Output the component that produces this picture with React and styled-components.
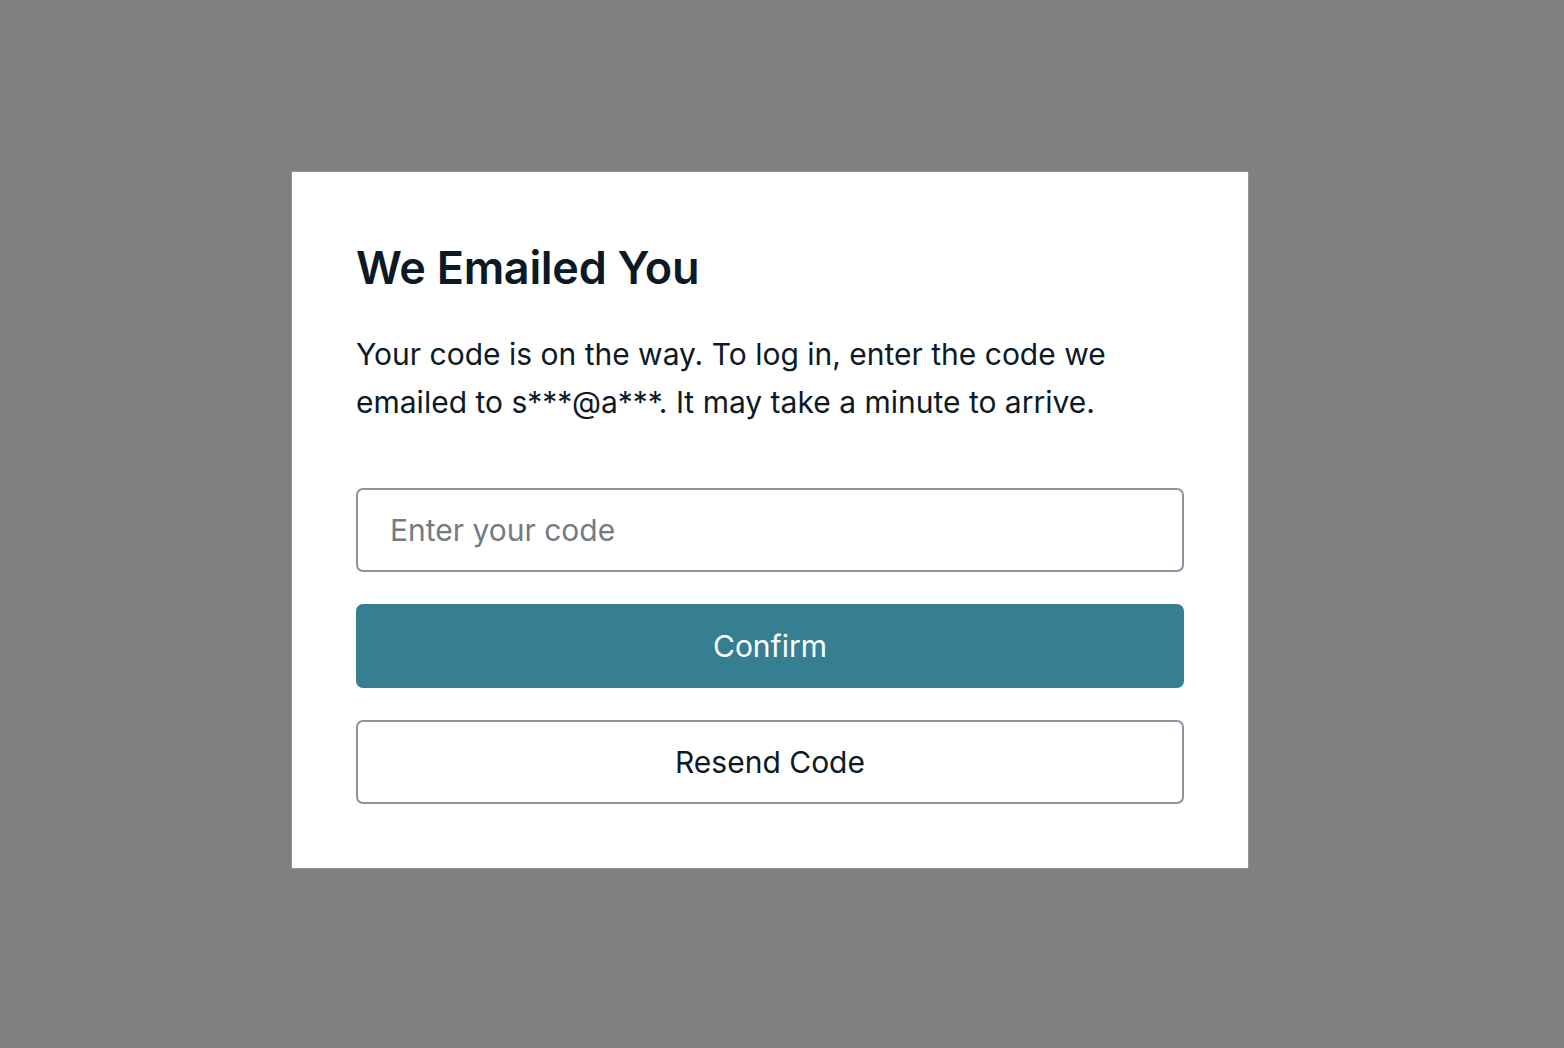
import React from "react"
import styled, { createGlobalStyle } from "styled-components"

const GlobalStyle = createGlobalStyle`
    html, body {
        margin: 0;
        padding: 0;
        background: #808080;
        font-family: 'Inter', 'Liberation Sans', sans-serif;
    }
    * {
        box-sizing: border-box;
    }
`

const Overlay = styled.main`
    min-height: 1048px;
    display: flex;
    justify-content: center;
    padding: 171px 24px 0 0;
`

const Card = styled.section`
    width: 958px;
    height: 698px;
    background: #ffffff;
    border: 1px solid #89949f;
    padding: 64px;
    display: flex;
    flex-direction: column;
`

const Title = styled.h1`
    margin: 0;
    font-size: 45px;
    font-weight: 600;
    line-height: 64px;
    color: #0d1a26;
    letter-spacing: -0.3px;
`

const Description = styled.p`
    margin: 30px 0 0;
    font-size: 30px;
    font-weight: 400;
    line-height: 48px;
    color: #0d1a26;
`

const Form = styled.form`
    margin-top: 62px;
    display: flex;
    flex-direction: column;
    gap: 32px;
`

const CodeInput = styled.input`
    height: 84px;
    width: 100%;
    border: 2px solid #89949f;
    border-radius: 7px;
    padding: 0 32px;
    font-family: inherit;
    font-size: 30px;
    color: #0d1a26;
    outline: none;

    &::placeholder {
        color: #737b83;
    }
`

const Button = styled.button`
    height: 84px;
    width: 100%;
    border-radius: 7px;
    font-family: inherit;
    font-size: 30px;
    font-weight: 400;
    cursor: pointer;
    border: 2px solid ${props => props.$primary ? '#367e92' : '#89949f'};
    background: ${props => props.$primary ? '#367e92' : '#ffffff'};
    color: ${props => props.$primary ? '#ffffff' : '#0d1a26'};
`

export default function App(){
    return(
        <>
            <GlobalStyle />
            <Overlay>
                <Card>
                    <Title>We Emailed You</Title>
                    <Description>
                        Your code is on the way. To log in, enter the code we emailed to s***@a***. It may take a minute to arrive.
                    </Description>
                    <Form onSubmit={e => e.preventDefault()}>
                        <CodeInput placeholder="Enter your code" />
                        <Button $primary type="submit">Confirm</Button>
                        <Button type="button">Resend Code</Button>
                    </Form>
                </Card>
            </Overlay>
        </>
    )
}
